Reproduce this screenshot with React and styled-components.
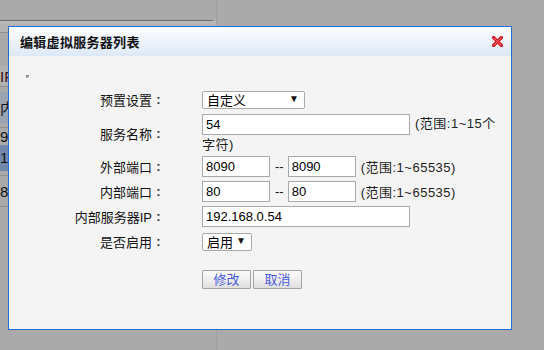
import React from 'react';
import styled, { createGlobalStyle } from 'styled-components';

const GlobalStyle = createGlobalStyle`
  html, body {
    margin: 0;
    padding: 0;
    background: #aaaaaa;
    font-family: "Liberation Sans", "Noto Sans CJK SC", sans-serif;
    font-size: 13px;
    color: #111;
  }
`;

const Screen = styled.div`
  position: relative;
  width: 544px;
  height: 350px;
  overflow: hidden;
  background: #aaaaaa;
`;

/* page behind the modal, already greyed out */
const BackPage = styled.div`
  display: flex;
  flex-direction: column;
  width: 217px;
`;

const BackTop = styled.div`
  height: 21px;
  border-right: 1px solid #9a9fa8;
  display: flex;
  align-items: flex-end;
`;

const BackRule = styled.div`
  width: 213px;
  height: 1px;
  background: #6a6a6a;
`;

const BackList = styled.div`
  border-right: 1px solid #9a9fa8;
  display: flex;
  flex-direction: column;
`;

const BackRow = styled.div`
  height: ${(p) => p.h}px;
  background: ${(p) => p.bg};
  border-bottom: 1px solid ${(p) => (p.line ? '#8f8f8f' : 'transparent')};
  display: flex;
  align-items: center;
  font-size: 15px;
  color: ${(p) => p.fg || '#222'};
  white-space: nowrap;
  overflow: hidden;
`;

const Dialog = styled.div`
  position: absolute;
  left: 8px;
  top: 26px;
  width: 504px;
  height: 304px;
  box-sizing: border-box;
  border: 1px solid #1d6fd6;
  background: #f4f4f4;
  display: flex;
  flex-direction: column;
`;

const Header = styled.div`
  height: 29px;
  background: linear-gradient(to bottom, #fdfeff 0%, #eef3fc 50%, #dde8f8 100%);
  display: flex;
  align-items: center;
  justify-content: space-between;
  padding: 0 8px 0 11px;
`;

const Title = styled.div`
  font-size: 13px;
  font-weight: bold;
  color: #111;
  letter-spacing: 0.3px;
`;

const Body = styled.div`
  flex: 1;
  padding: 18px 0 0 17px;
  display: flex;
  flex-direction: column;
`;

const Marker = styled.div`
  width: 3px;
  height: 3px;
  margin-top: 1px;
  background: linear-gradient(135deg, #8a8a8a 50%, #cfcfcf 50%);
`;

const Form = styled.div`
  margin: 9px 0 0 -17px;
  display: flex;
  flex-direction: column;
`;

const Row = styled.div`
  display: grid;
  grid-template-columns: 156px 298px;
  column-gap: 37px;
  align-items: center;
  min-height: ${(p) => p.h || 25}px;
`;

const Label = styled.div`
  display: flex;
  justify-content: flex-end;
  align-items: center;
  white-space: nowrap;
  color: #111;
`;

const Colon = styled.span`
  display: inline-block;
  width: 13px;
  text-align: center;
  font-weight: bold;
  color: #333;
`;

const Value = styled.div`
  display: flex;
  align-items: center;
`;

const FlowValue = styled.div`
  padding: 2px 0 0;
  line-height: 19px;
  color: #222;
`;

const TextInput = styled.div`
  display: ${(p) => (p.inline ? 'inline-flex' : 'flex')};
  vertical-align: middle;
  align-items: center;
  box-sizing: border-box;
  width: ${(p) => p.w}px;
  height: 21px;
  padding-left: 3px;
  border: 1px solid #a9a9a9;
  background: #fff;
  color: #000;
  line-height: 19px;
`;

const Select = styled.div`
  display: flex;
  align-items: center;
  justify-content: space-between;
  box-sizing: border-box;
  width: ${(p) => p.w}px;
  height: 18px;
  padding: 0 5px 0 4px;
  border: 1px solid #a9a9a9;
  border-radius: 2px;
  background: #fff;
  color: #000;
`;

const Arrow = styled.span`
  font-size: 10px;
  color: #111;
  margin-top: -2px;
`;

const Dash = styled.span`
  margin: 0 4px 0 5px;
`;

const Hint = styled.span`
  margin-left: ${(p) => (p.cont ? 0 : 5)}px;
  color: #222;
  letter-spacing: 0.5px;
`;

const Buttons = styled.div`
  display: flex;
  gap: 2px;
  margin: 16px 0 0 193px;
`;

const Button = styled.button`
  width: 49px;
  height: 19px;
  padding: 0;
  border: 1px solid #a3a3a3;
  border-radius: 1px;
  background: linear-gradient(to bottom, #fbfbfb 0%, #ececec 60%, #dedede 100%);
  font-family: inherit;
  font-size: 13px;
  line-height: 17px;
  color: #4a5bdc;
  cursor: pointer;
`;

const CloseIcon = () => (
  <svg width="11" height="11" viewBox="0 0 11 11">
    <path d="M1.5 1.5 L9.5 9.5 M9.5 1.5 L1.5 9.5" stroke="#d81e24" strokeWidth="3.2" strokeLinecap="round" />
    <path d="M2 2 L9 9 M9 2 L2 9" stroke="#f26a6e" strokeWidth="1" strokeLinecap="round" />
  </svg>
);

const backRows = [
  { h: 2, bg: '#b8b8b8' },
  { h: 8, bg: '#b3b3b3', line: true },
  { h: 32, bg: '#a9a9a9' },
  { h: 20, bg: '#b1b1b1', line: true, text: 'IF', fg: '#3a1010' },
  { h: 4, bg: '#a9a9a9' },
  { h: 30, bg: '#9ba4b1', text: '内部', fg: '#111' },
  { h: 4, bg: '#a9a9a9', line: true },
  { h: 16, bg: '#a9a9a9', text: '9', fg: '#111' },
  { h: 25, bg: '#7188ac', text: '19', fg: '#111' },
  { h: 4, bg: '#a9a9a9', line: true },
  { h: 30, bg: '#a9a9a9', text: '8', fg: '#111', line: true },
  { h: 160, bg: '#aaaaaa' },
];

const FieldLabel = ({ children }) => (
  <Label>
    <span>{children}</span>
    <Colon>:</Colon>
  </Label>
);

const PortRow = ({ label, from, to }) => (
  <Row>
    <FieldLabel>{label}</FieldLabel>
    <Value>
      <TextInput w={68}>{from}</TextInput>
      <Dash>--</Dash>
      <TextInput w={68}>{to}</TextInput>
      <Hint>(范围:1~65535)</Hint>
    </Value>
  </Row>
);

const App = () => {
  return (
    <Screen>
      <GlobalStyle />
      <BackPage>
        <BackTop>
          <BackRule />
        </BackTop>
        <BackList>
          {backRows.map((r, i) => (
            <BackRow key={i} h={r.h} bg={r.bg} line={r.line} fg={r.fg}>
              {r.text}
            </BackRow>
          ))}
        </BackList>
      </BackPage>

      <Dialog>
        <Header>
          <Title>编辑虚拟服务器列表</Title>
          <CloseIcon />
        </Header>
        <Body>
          <Marker />
          <Form>
            <Row h={25}>
              <FieldLabel>预置设置</FieldLabel>
              <Value>
                <Select w={103}>
                  <span>自定义</span>
                  <Arrow>▼</Arrow>
                </Select>
              </Value>
            </Row>
            <Row h={41}>
              <FieldLabel>服务名称</FieldLabel>
              <FlowValue>
                <TextInput inline w={208}>54</TextInput>
                <Hint>(范围:1~15个</Hint>
                <Hint cont>字符)</Hint>
              </FlowValue>
            </Row>
            <PortRow label="外部端口" from="8090" to="8090" />
            <PortRow label="内部端口" from="80" to="80" />
            <Row>
              <FieldLabel>内部服务器IP</FieldLabel>
              <Value>
                <TextInput w={208}>192.168.0.54</TextInput>
              </Value>
            </Row>
            <Row>
              <FieldLabel>是否启用</FieldLabel>
              <Value>
                <Select w={50}>
                  <span>启用</span>
                  <Arrow>▼</Arrow>
                </Select>
              </Value>
            </Row>
            <Buttons>
              <Button>修改</Button>
              <Button>取消</Button>
            </Buttons>
          </Form>
        </Body>
      </Dialog>
    </Screen>
  );
};

export default App;
